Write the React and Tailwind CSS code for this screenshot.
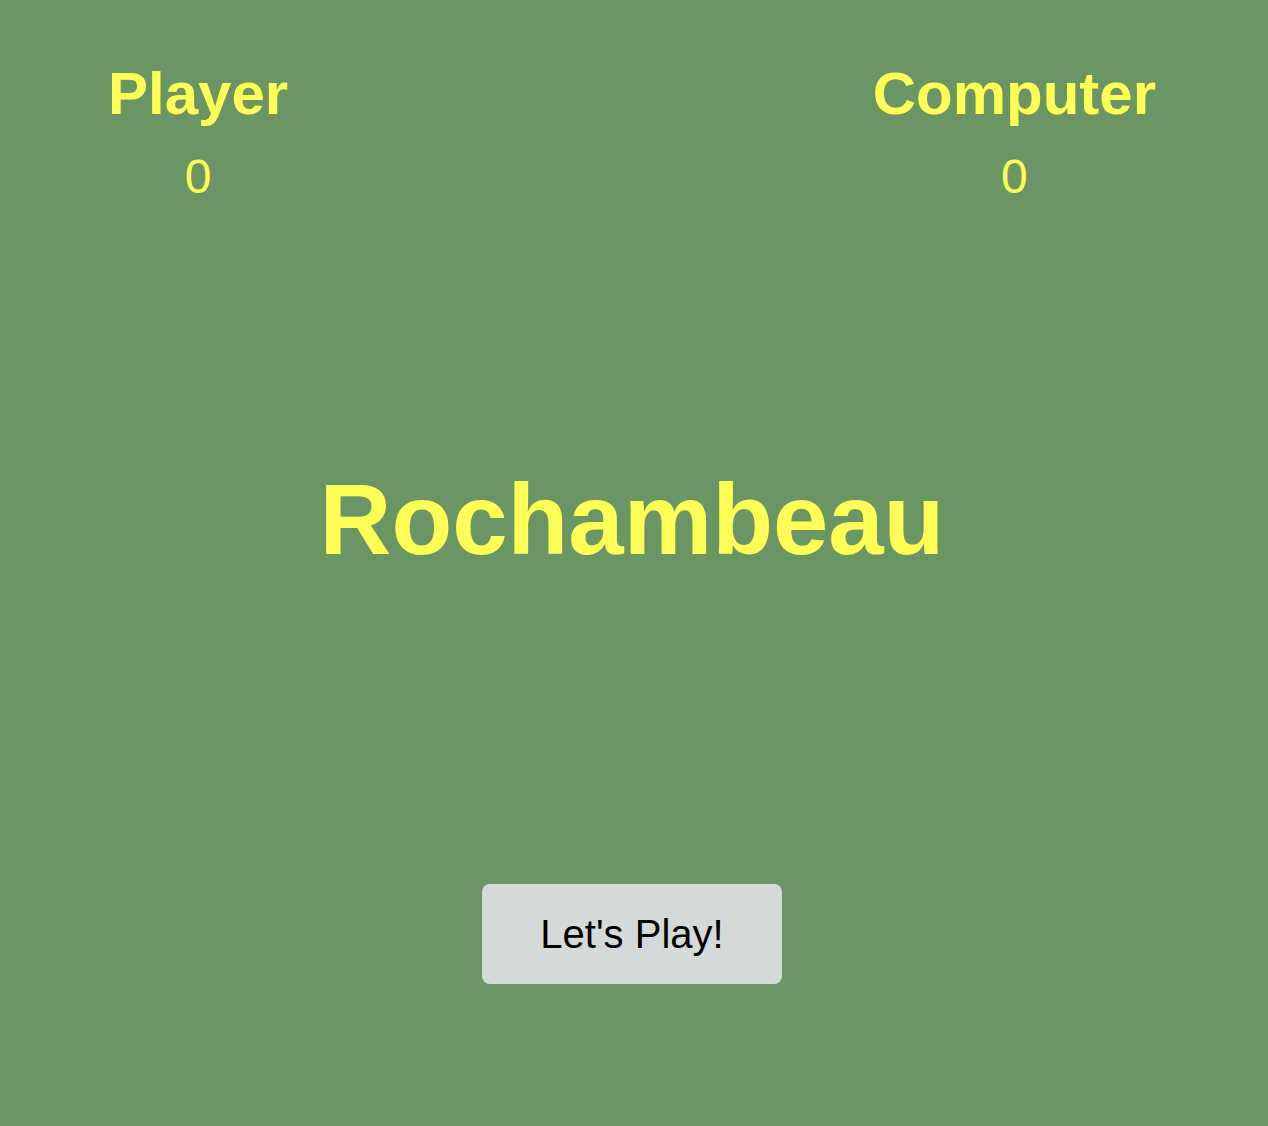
export default function App() {
  return (
    <div
      className="min-h-[1126px] w-full bg-[#6a9565] text-[#ffff55]"
      style={{ fontFamily: '"Liberation Sans", Arial, Helvetica, sans-serif' }}
    >
      <div className="flex justify-between pl-[108px] pr-[112px] pt-[59px]">
        <div className="flex flex-col items-center">
          <h2 className="text-[60px] font-bold leading-[69px]">Player</h2>
          <div className="mt-[21px] text-[48px] leading-[55px]">0</div>
        </div>
        <div className="flex flex-col items-center">
          <h2 className="text-[60px] font-bold leading-[69px]">Computer</h2>
          <div className="mt-[21px] text-[48px] leading-[55px]">0</div>
        </div>
      </div>
      <h1 className="mt-[258px] pr-[4px] text-center text-[99.5px] font-bold leading-[115px]">
        Rochambeau
      </h1>
      <div className="mt-[307px] flex justify-center pr-[4px]">
        <button className="h-[100px] w-[300px] rounded-lg bg-[#d5dad8] text-[40px] text-black">
          Let's Play!
        </button>
      </div>
    </div>
  );
}
